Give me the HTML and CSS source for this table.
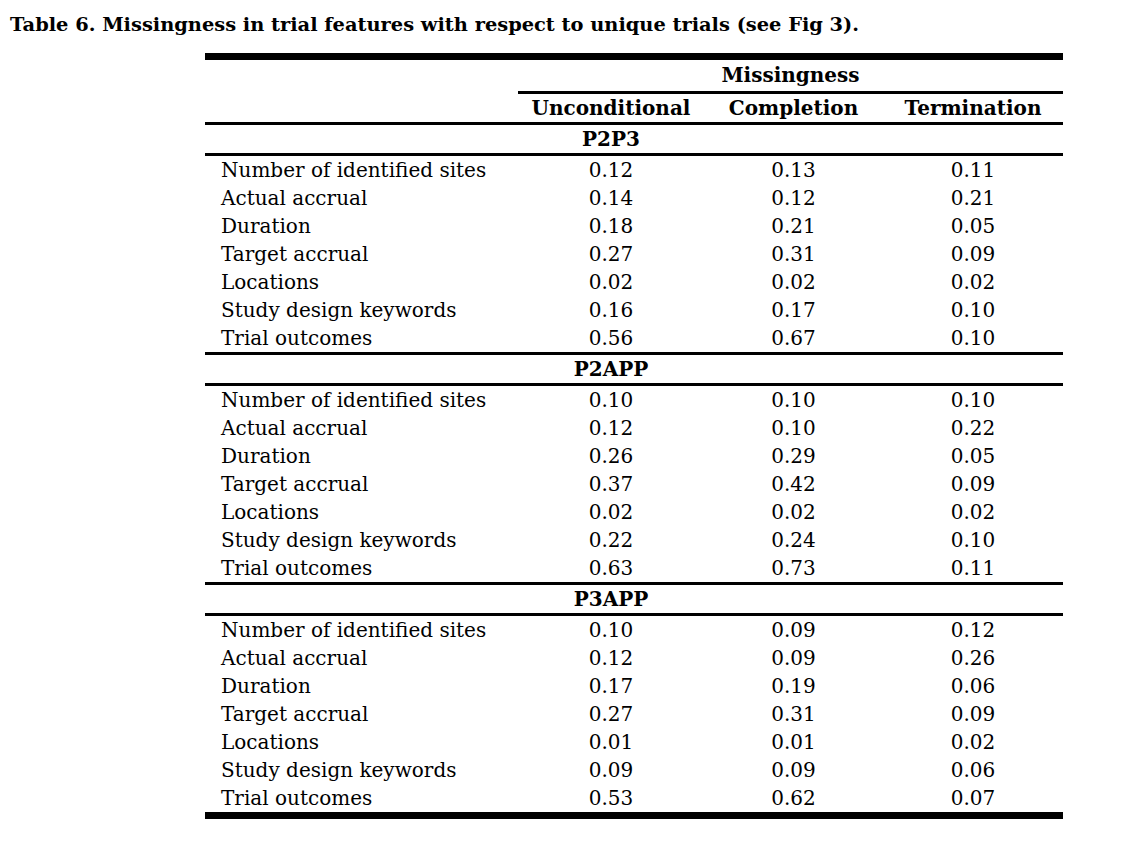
FILE: index.html
```html
<!DOCTYPE html>
<html lang="en">
<head>
<meta charset="utf-8">
<title>Table 6</title>
<link rel="stylesheet" href="styles.css">
</head>
<body>
<h1 class="caption">Table 6. Missingness in trial features with respect to unique trials (see Fig 3).</h1>
<table class="tbl">
  <colgroup>
    <col class="c-label"><col class="c-unc"><col class="c-comp"><col class="c-term">
  </colgroup>
  <thead>
    <tr class="r-super">
      <th></th>
      <th colspan="3" class="super">Missingness</th>
    </tr>
    <tr class="r-head">
      <th></th>
      <th>Unconditional</th>
      <th>Completion</th>
      <th>Termination</th>
    </tr>
  </thead>
  <tbody>
    <tr class="r-group"><th></th><th>P2P3</th><th></th><th></th></tr>
    <tr><td class="lbl">Number of identified sites</td><td>0.12</td><td>0.13</td><td>0.11</td></tr>
    <tr><td class="lbl">Actual accrual</td><td>0.14</td><td>0.12</td><td>0.21</td></tr>
    <tr><td class="lbl">Duration</td><td>0.18</td><td>0.21</td><td>0.05</td></tr>
    <tr><td class="lbl">Target accrual</td><td>0.27</td><td>0.31</td><td>0.09</td></tr>
    <tr><td class="lbl">Locations</td><td>0.02</td><td>0.02</td><td>0.02</td></tr>
    <tr><td class="lbl">Study design keywords</td><td>0.16</td><td>0.17</td><td>0.10</td></tr>
    <tr class="r-last"><td class="lbl">Trial outcomes</td><td>0.56</td><td>0.67</td><td>0.10</td></tr>
  </tbody>
  <tbody>
    <tr class="r-group"><th></th><th>P2APP</th><th></th><th></th></tr>
    <tr><td class="lbl">Number of identified sites</td><td>0.10</td><td>0.10</td><td>0.10</td></tr>
    <tr><td class="lbl">Actual accrual</td><td>0.12</td><td>0.10</td><td>0.22</td></tr>
    <tr><td class="lbl">Duration</td><td>0.26</td><td>0.29</td><td>0.05</td></tr>
    <tr><td class="lbl">Target accrual</td><td>0.37</td><td>0.42</td><td>0.09</td></tr>
    <tr><td class="lbl">Locations</td><td>0.02</td><td>0.02</td><td>0.02</td></tr>
    <tr><td class="lbl">Study design keywords</td><td>0.22</td><td>0.24</td><td>0.10</td></tr>
    <tr class="r-last"><td class="lbl">Trial outcomes</td><td>0.63</td><td>0.73</td><td>0.11</td></tr>
  </tbody>
  <tbody>
    <tr class="r-group"><th></th><th>P3APP</th><th></th><th></th></tr>
    <tr><td class="lbl">Number of identified sites</td><td>0.10</td><td>0.09</td><td>0.12</td></tr>
    <tr><td class="lbl">Actual accrual</td><td>0.12</td><td>0.09</td><td>0.26</td></tr>
    <tr><td class="lbl">Duration</td><td>0.17</td><td>0.19</td><td>0.06</td></tr>
    <tr><td class="lbl">Target accrual</td><td>0.27</td><td>0.31</td><td>0.09</td></tr>
    <tr><td class="lbl">Locations</td><td>0.01</td><td>0.01</td><td>0.02</td></tr>
    <tr><td class="lbl">Study design keywords</td><td>0.09</td><td>0.09</td><td>0.06</td></tr>
    <tr class="r-last"><td class="lbl">Trial outcomes</td><td>0.53</td><td>0.62</td><td>0.07</td></tr>
  </tbody>
</table>
</body>
</html>
```
FILE: styles.css
```css
html, body {
  margin: 0;
  padding: 0;
  background: #ffffff;
  color: #000000;
}
body {
  font-family: "DejaVu Serif", "Liberation Serif", serif;
  padding: 13px 0 0 10px;
}
.caption {
  margin: 0;
  font-size: 19.4px;
  font-weight: bold;
  line-height: 24px;
  white-space: nowrap;
}
.tbl {
  margin: 16px 0 0 195px;
  border-collapse: collapse;
  table-layout: fixed;
  width: 858px;
  font-size: 20px;
  border-top: 7px solid #000;
  border-bottom: 7px solid #000;
}
.c-label { width: 313px; }
.c-unc { width: 186px; }
.c-comp { width: 179px; }
.c-term { width: 180px; }
.tbl th, .tbl td {
  padding: 0;
  text-align: center;
  vertical-align: middle;
  white-space: nowrap;
  height: 28px;
  line-height: 28px;
}
.tbl th { font-weight: bold; }
.r-super th { height: 29px; line-height: 31px; }
.super { border-bottom: 3px solid #000; }
.r-head th { border-bottom: 3px solid #000; }
.r-group th { border-bottom: 3px solid #000; }
.tbl tbody + tbody tr:first-child th { border-top: 3px solid #000; }
.tbl td.lbl { text-align: left; padding-left: 16px; }
```
